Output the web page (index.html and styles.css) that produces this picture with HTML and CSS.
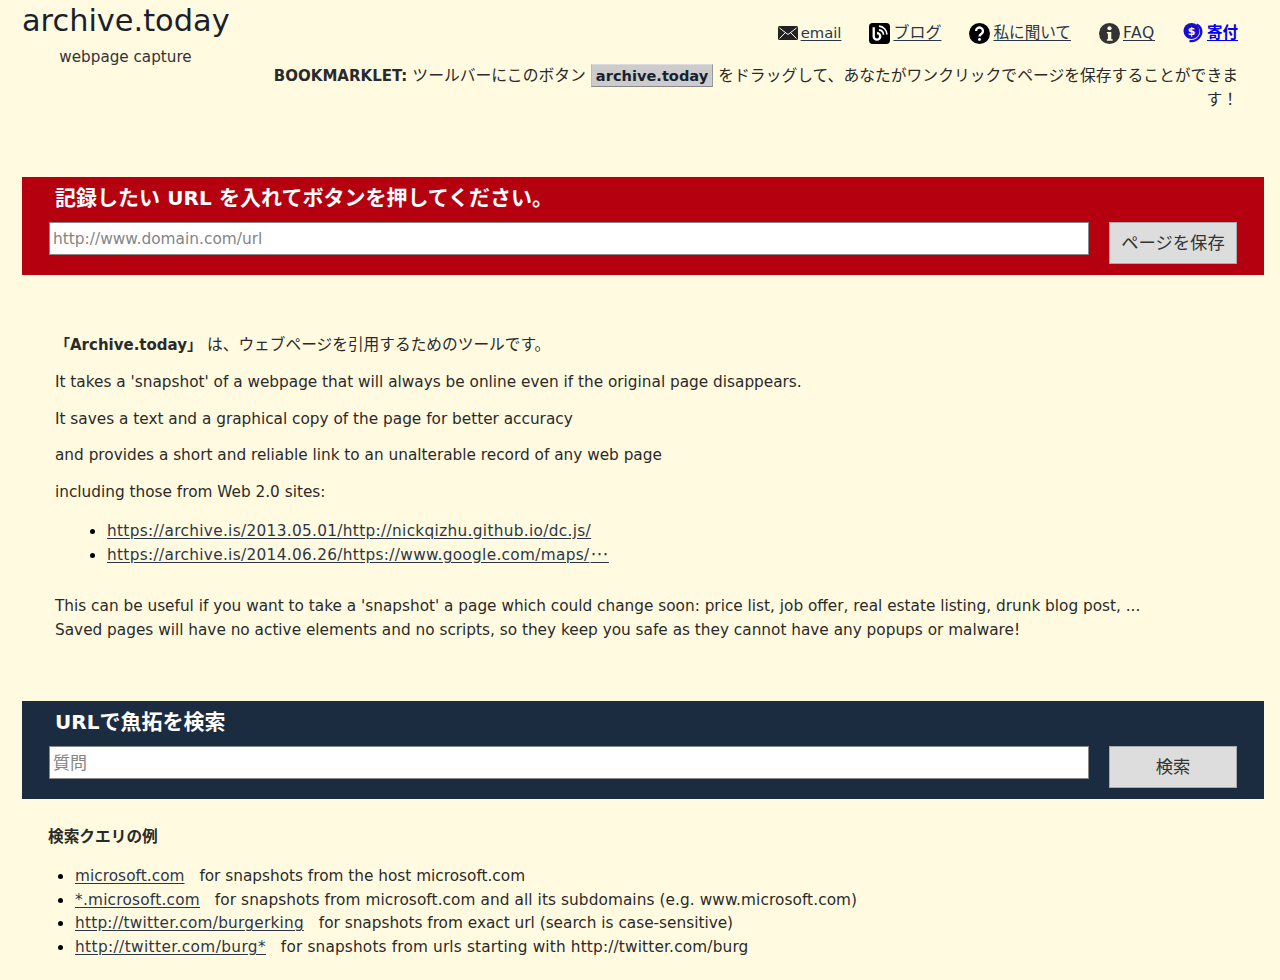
FILE: index.html
```html
<!DOCTYPE html>
<html lang="ja">
<head>
<meta charset="utf-8">
<title>archive.today</title>
<link rel="stylesheet" href="styles.css">
</head>
<body>
<header class="top">
  <div class="brand">
    <div class="logo">archive.today</div>
    <div class="tagline">webpage capture</div>
  </div>
  <div class="topright">
    <nav class="nav">
      <span class="navitem">
        <svg class="ic ic-mail" viewBox="0 0 20 14"><rect width="20" height="14" rx="1.5" fill="#222"/><path d="M1.500 2 10 8.500 18.500 2M1.500 12.500l6-6M18.500 12.500l-6-6" fill="none" stroke="#fffae0" stroke-width="1"/></svg>
        <a class="mail" href="#">email</a></span>
      <span class="navitem">
        <svg class="ic" viewBox="0 0 20 20"><rect width="20" height="20" rx="3.500" fill="#000"/><path d="M4.500 4v8.800a3.100 3.100 0 1 0 3.100-3.100" fill="none" stroke="#fff" stroke-width="2.200"/><path d="M9.500 3a8 8 0 0 1 7.500 8M9.500 6.500a4.800 4.800 0 0 1 4.300 4.700" fill="none" stroke="#fff" stroke-width="1.600"/></svg>
        <a class="blog" href="#">ブログ</a></span>
      <span class="navitem">
        <svg class="ic" viewBox="0 0 20 20"><circle cx="10" cy="10" r="10" fill="#000"/><path d="M6.700 7.600a3.300 3.300 0 1 1 5.200 2.700c-1.200.8-1.900 1.300-1.900 2.600" fill="none" stroke="#fff" stroke-width="2.200"/><circle cx="10" cy="15.800" r="1.400" fill="#fff"/></svg>
        <a href="#">私に聞いて</a></span>
      <span class="navitem">
        <svg class="ic" viewBox="0 0 20 20"><circle cx="10" cy="10" r="10" fill="#333"/><circle cx="10" cy="5" r="2" fill="#fffae0"/><path d="M7.500 8.500h4.200v7H13V17H7.500v-1.500h1v-5.500h-1z" fill="#fffae0"/></svg>
        <a class="faq" href="#">FAQ</a></span>
      <span class="navitem">
        <svg class="ic" viewBox="0 0 21 21"><circle cx="8.500" cy="8" r="8" fill="#1a0fc8"/><text class="dollar" x="8.500" y="12" text-anchor="middle">$</text><path d="M13.500 1.500c5 2 6.500 8.500 2.500 13-2.200 2.500-5.500 4-9.500 3.500" fill="none" stroke="#1a0fc8" stroke-width="2.400"/></svg>
        <a class="donate" href="#">寄付</a></span>
    </nav>
    <p class="bookmarklet"><b class="bm-label">BOOKMARKLET:</b> ツールバーにこのボタン <a class="bm" href="#">archive.today</a> をドラッグして、あなたがワンクリックでページを保存することができます！</p>
  </div>
</header>

<section class="panel panel-red">
  <h2 class="panel-title">記録したい <span class="latin">URL</span> を入れてボタンを押してください。</h2>
  <form class="panel-row">
    <input class="field" type="text" placeholder="http://www.domain.com/url">
    <button class="btn" type="button">ページを保存</button>
  </form>
</section>

<main class="about">
  <p class="line jp"><b class="bm-label">「Archive.today」</b> は、ウェブページを引用するためのツールです。</p>
  <p class="line">It takes a 'snapshot' of a webpage that will always be online even if the original page disappears.</p>
  <p class="line">It saves a text and a graphical copy of the page for better accuracy</p>
  <p class="line">and provides a short and reliable link to an unalterable record of any web page</p>
  <p class="line">including those from Web 2.0 sites:</p>
  <ul class="samples">
    <li><a href="#">https://archive.is/2013.05.01/http://nickqizhu.github.io/dc.js/</a></li>
    <li><a href="#">https://archive.is/2014.06.26/https://www.google.com/maps/<span class="ell">⋯</span></a></li>
  </ul>
  <p class="closing">This can be useful if you want to take a 'snapshot' a page which could change soon: price list, job offer, real estate listing, drunk blog post, ...<br>Saved pages will have no active elements and no scripts, so they keep you safe as they cannot have any popups or malware!</p>
</main>

<section class="panel panel-navy">
  <h2 class="panel-title"><span class="latin">URL</span>で魚拓を検索</h2>
  <form class="panel-row">
    <input class="field field-jp" type="text" placeholder="質問">
    <button class="btn" type="button">検索</button>
  </form>
</section>

<section class="examples">
  <h3 class="examples-title">検索クエリの例</h3>
  <ul class="queries">
    <li><a href="#">microsoft.com</a> <span class="desc">for snapshots from the host microsoft.com</span></li>
    <li><a class="q-wide" href="#">*.microsoft.com</a> <span class="desc desc-a">for snapshots from microsoft.com and all its subdomains (e.g. www.microsoft.com)</span></li>
    <li><a class="q-wide" href="#">http://twitter.com/burgerking</a> <span class="desc">for snapshots from exact url (search is case-sensitive)</span></li>
    <li><a class="q-wider" href="#">http://twitter.com/burg*</a> <span class="desc desc-b">for snapshots from urls starting with http://twitter.com/burg</span></li>
  </ul>
</section>
</body>
</html>
```
FILE: styles.css
```css
html, body { margin: 0; padding: 0; }
body {
  background: #fffae0;
  color: #2a2a2a;
  font-family: "DejaVu Sans", "Noto Sans CJK JP", sans-serif;
  font-size: 15.3px;
  line-height: 24px;
  padding: 0 16px 0 22px;
  height: 980px;
  box-sizing: border-box;
  overflow: hidden;
}
a { color: #2b3648; text-underline-offset: 2px; }
.top { display: flex; height: 177px; }
.brand { width: 207px; text-align: center; flex: none; padding-top: 1px; }
.logo { font-size: 30.4px; line-height: 40px; color: #1a1f2e; white-space: nowrap; }
.tagline { font-size: 15.2px; line-height: 24px; margin-top: 4px; color: #333; }
.topright { flex: 1; padding: 18px 26px 0 40px; text-align: right; }
.nav { display: flex; justify-content: flex-end; gap: 28px; height: 30px; align-items: center; }
.navitem { display: flex; align-items: center; gap: 3px; }
.navitem a { font-size: 15.6px; }
.navitem .mail { font-size: 14.8px; }
.navitem .blog { font-size: 16px; }
.navitem .faq { letter-spacing: .6px; }
.navitem .donate { color: #00e; font-weight: bold; font-size: 15.5px; }
.ic { width: 21px; height: 21px; flex: none; }
.ic-mail { width: 20px; height: 14px; }
.dollar { font-size: 11px; font-weight: bold; fill: #fff; }
.bookmarklet { margin: 16px 0 0; line-height: 24px; font-size: 15.8px; }
.bm-label { font-size: 15px; }
.bm {
  background: #ccc; border: 1px solid; border-color: #ddd #999 #888 #bbb; padding: 2px 4px;
  font-weight: bold; font-size: 14.6px; text-decoration: none; color: #1a1f2e;
}
.panel { color: #fff; padding: 8px 27px 0 27px; height: 98px; box-sizing: border-box; }
.panel-red { background: #b4000f; }
.panel-navy { background: #1c2c40; }
.panel-title { margin: 0 0 0 6px; font-size: 21px; line-height: 26px; font-weight: bold; }
.latin { font-size: 20px; }
.panel-row { display: flex; justify-content: space-between; margin-top: 11px; align-items: flex-start; }
.field {
  width: 1040px; height: 33px; box-sizing: border-box; border: 1px solid #888;
  background: #fff; padding: 0 3px; font: 15.4px "DejaVu Sans", "Noto Sans CJK JP", sans-serif; color: #222;
}
.field-jp { font-size: 17px; }
.field::placeholder { color: #858585; opacity: 1; }
.btn {
  width: 128px; height: 42px; background: #ddd; border: 1px solid #aaa;
  font: 17.3px "DejaVu Sans", "Noto Sans CJK JP", sans-serif; color: #333; padding: 0 0 3px;
}
.about { padding: 58px 0 0 33px; height: 426px; box-sizing: border-box; }
.line { margin: 0 0 12.6px; line-height: 24px; white-space: nowrap; }
.jp { font-size: 15.7px; margin-bottom: 13px; }
.samples { margin: 15px 0 0; padding-left: 52px; line-height: 23px; }
.samples a { letter-spacing: .33px; }
.ell { font-size: 18px; margin-left: 1px; line-height: 1; }
li::marker { color: #000; font-size: 17px; }
.closing { margin: 27px 0 0; line-height: 24px; }
.examples { padding: 26px 0 0 26px; }
.examples-title { margin: 0; font-size: 15.7px; line-height: 24px; }
.queries { margin: 15px 0 0; padding-left: 27px; line-height: 22.7px; }
.queries a { letter-spacing: .05px; }
.queries .q-wide { letter-spacing: .24px; }
.queries .q-wider { letter-spacing: .4px; }
.desc { margin-left: 10px; }
.desc-a { letter-spacing: .09px; }
.desc-b { letter-spacing: .17px; }
```
